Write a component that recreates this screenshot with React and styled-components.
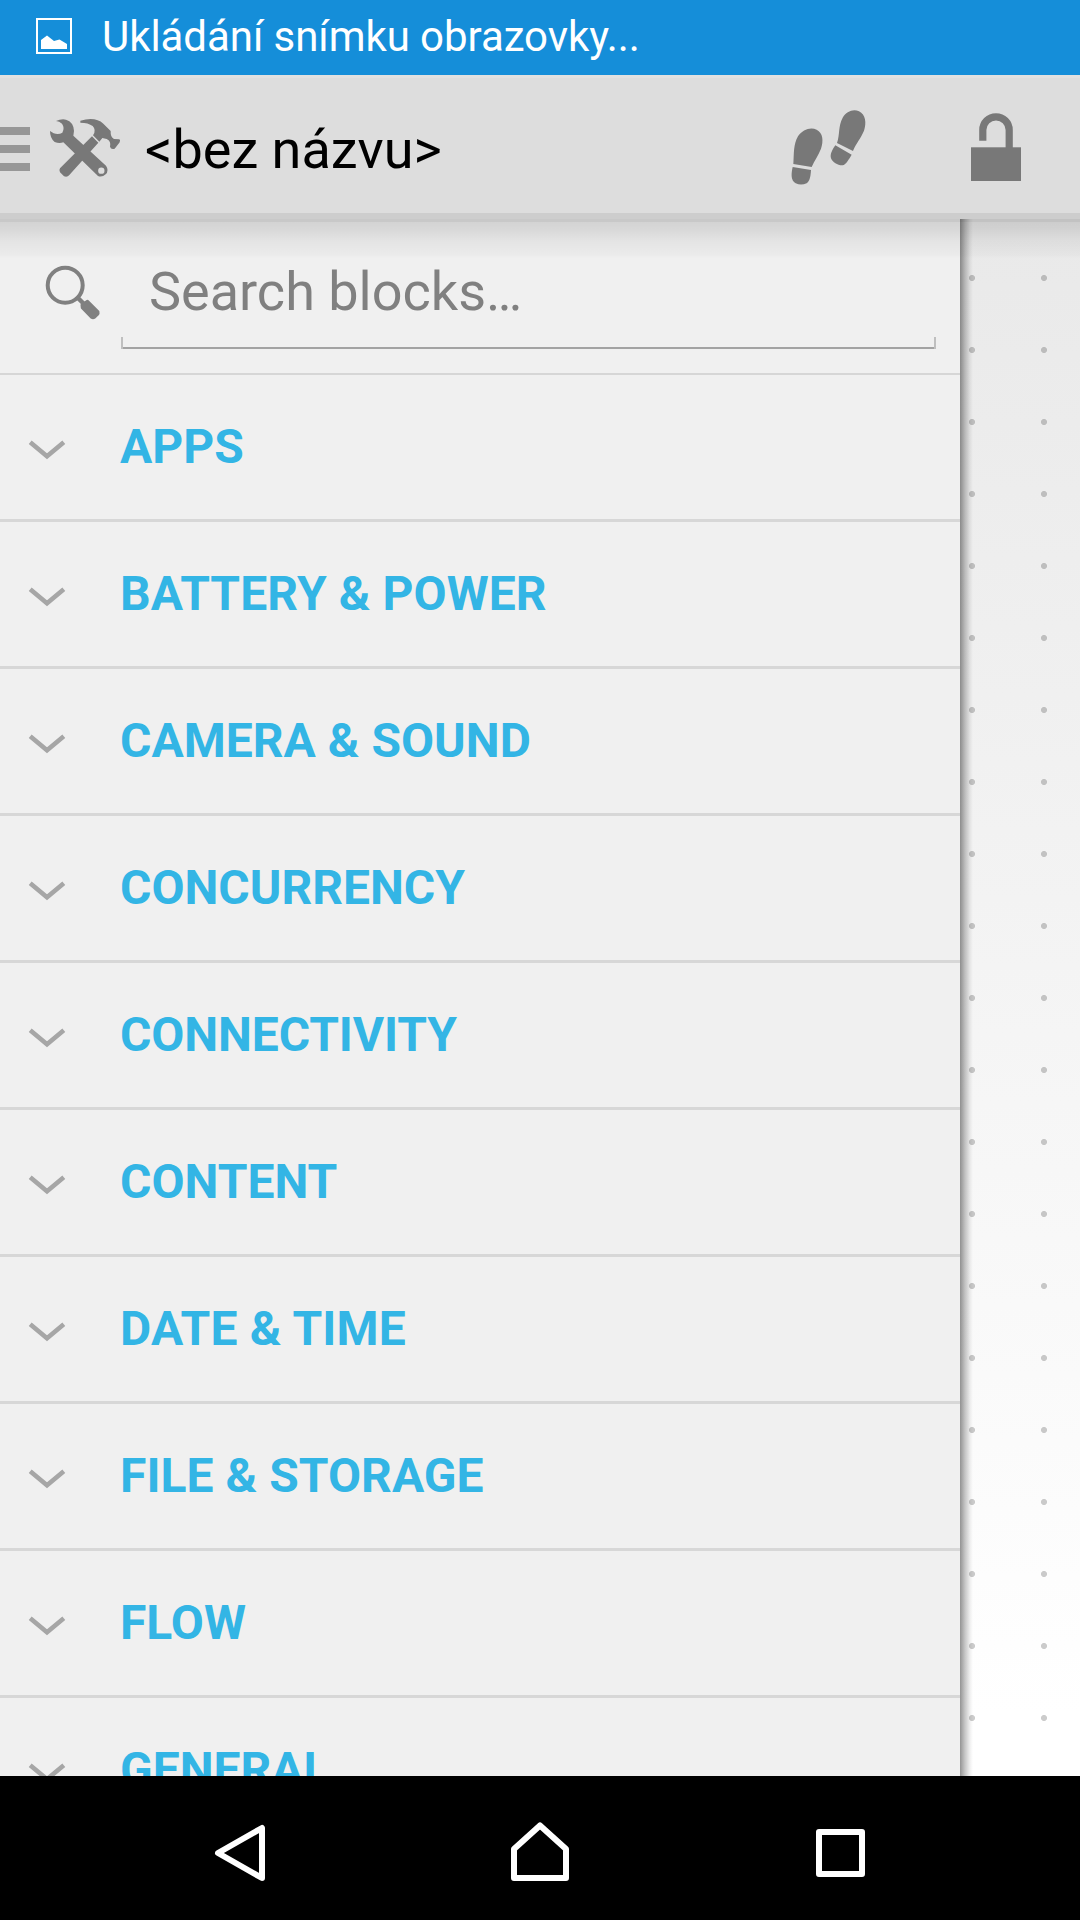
import React from 'react';
import styled, { createGlobalStyle } from 'styled-components';

const GlobalStyle = createGlobalStyle`
  html, body { margin: 0; padding: 0; background: #000; }
  *, *::before, *::after { box-sizing: border-box; }
`;

const Screen = styled.div`
  display: flex;
  flex-direction: column;
  width: 1080px;
  height: 1920px;
  overflow: hidden;
  font-family: Roboto, "Noto Sans", sans-serif;
`;

const StatusBar = styled.header`
  display: flex;
  align-items: center;
  flex: 0 0 75px;
  padding: 0 36px 3px;
  gap: 30px;
  background: #158ed9;
  color: #fff;
  font-size: 42px;
  letter-spacing: -0.06px;
  line-height: 70px;
  white-space: nowrap;
`;

const StatusText = styled.span`
  margin-top: 2px;
`;

const Toolbar = styled.div`
  display: flex;
  align-items: center;
  flex: 0 0 144px;
  border-top: 3px solid #e1e1e1;
  border-bottom: 6px solid #cdcdcd;
  background: #ddd;
`;

const MenuBars = styled.div`
  display: flex;
  flex-direction: column;
  gap: 10px;
  width: 30px;
  margin: 7px 19px 0 0;
`;

const MenuBar = styled.span`
  height: 8px;
  background: #979797;
`;

const Title = styled.h1`
  flex: 1;
  margin: 8px 0 0 24px;
  font-size: 54px;
  font-weight: 400;
  line-height: 64px;
  color: #000;
`;

const Action = styled.button`
  display: flex;
  align-items: center;
  justify-content: center;
  width: 168px;
  height: 135px;
  padding: 0;
  border: 0;
  background: none;
`;

const Icon = styled.svg`
  display: block;
  flex: none;
  width: ${(p) => p.$w}px;
  height: ${(p) => p.$h}px;
  margin: ${(p) => p.$m || '0'};
  overflow: visible;
`;

const Workspace = styled.main`
  position: relative;
  display: flex;
  flex: 1;
  min-height: 0;
  overflow: hidden;

  &::after {
    content: "";
    position: absolute;
    inset: 0 0 auto 0;
    height: 39px;
    pointer-events: none;
    background: linear-gradient(
      rgba(0, 0, 0, 0.168) 0 3px,
      rgba(0, 0, 0, 0.12) 3px,
      rgba(0, 0, 0, 0.1) 10px,
      rgba(0, 0, 0, 0.05) 22px,
      rgba(0, 0, 0, 0.02) 36px,
      rgba(0, 0, 0, 0) 39px
    );
  }
`;

const Drawer = styled.aside`
  display: flex;
  flex-direction: column;
  flex: 0 0 960px;
  background: #f0f0f0;
`;

const SearchRow = styled.div`
  display: flex;
  flex: 0 0 156px;
  padding: 0 24px 0 45px;
  border-bottom: 2px solid #d6d6d6;
`;

const SearchField = styled.div`
  position: relative;
  flex: 1;
  height: 130px;
  margin-left: 21px;
  padding: 41px 0 0 28px;
  border-bottom: 2px solid #a3a3a3;
  color: #808080;
  font-size: 54px;
  line-height: 64px;

  &::before,
  &::after {
    content: "";
    position: absolute;
    bottom: -2px;
    width: 2px;
    height: 12px;
    background: #bfbfbf;
  }
  &::before { left: 0; }
  &::after { right: 0; }
`;

const CategoryList = styled.ul`
  flex: 1;
  min-height: 0;
  margin: 0;
  padding: 0;
  overflow: hidden;
  list-style: none;
`;

const Category = styled.li`
  display: flex;
  align-items: center;
  height: 147px;
  padding: 0 0 1px 28px;
  border-bottom: 3px solid #d7d7d7;
  color: #33b5e5;
  font-size: 48px;
  font-weight: 700;
  letter-spacing: ${(p) => p.$tracking || 0}px;
  line-height: 56px;
  white-space: nowrap;
`;

const FlowCanvas = styled.section`
  flex: 1;
  background:
    linear-gradient(90deg, rgba(0,0,0,.42), rgba(0,0,0,.22) 5px, rgba(0,0,0,.06) 10px, rgba(0,0,0,0) 13px),
    radial-gradient(circle at 36px 36px, rgba(0,0,0,.2) 2.7px, rgba(0,0,0,0) 3.3px) -24px 23px / 72px 72px,
    linear-gradient(#e9e9e9, #fff 96%);
`;

const NavBar = styled.nav`
  display: flex;
  align-items: center;
  justify-content: space-between;
  flex: 0 0 144px;
  padding: 10px 215px 0;
  background: #000;
`;

const ScreenshotIcon = () => (
  <Icon $w={36} $h={36} viewBox="0 0 36 36">
    <rect x="1" y="1" width="34" height="34" fill="none" stroke="#fff" strokeWidth="2" />
    <path d="M5 31V22L11 17.5L18 23L23.5 21.5L31 26V31Z" fill="#fff" />
  </Icon>
);

const ToolsIcon = () => (
  <Icon $w={72} $h={60} $m="5px 0 0 0" viewBox="147 354 216 180" fill="#787878">
    <path d="M168 363Q184 356 198 359Q221 366 222 393L220 407L318 497Q328 512 317 523Q306 533 294 528L190 427Q178 432 164 426Q150 415 150 393L161 400Q176 405 187 398Q195 384 186 371Q178 364 168 363Z" />
    <path d="M276 409L295 428L208 525Q202 533 192 529L180 517Q176 511 180 505Z" />
    <path d="M241 362Q286 349 310 371L332 393Q331 412 342 417L358 418Q362 420 359 427L344 446Q333 450 330 440Q334 424 320 417L307 414L298 425L279 406Q290 391 278 378Q265 368 241 368Z" />
    <circle cx="304" cy="512" r="9.5" fill="#ddd" />
  </Icon>
);

const StepsIcon = () => (
  <Icon $w={75} $h={75} $m="3px 0 0 0" viewBox="212 149 225 225" fill="#787878">
    <path d="M219 311C221 279 219 252 233 228C247 207 271 199 289 208C308 218 310 241 302 265C294 286 283 299 274 320Z" />
    <path d="M217 320L272 329C271 345 269 362 259 369Q242 376 226 369C210 360 213 338 217 320Z" />
    <path d="M350 248C359 223 353 198 367 172C378 154 398 145 416 153C436 162 439 188 431 211C421 235 407 249 398 272Z" />
    <path d="M345 255L394 283C386 296 377 313 367 315C353 316 337 306 332 294C328 281 337 267 345 255Z" />
  </Icon>
);

const UnlockIcon = () => (
  <Icon $w={50} $h={68} $m="2px 0 0 0" viewBox="0 0 50 68">
    <path d="M11.8 27.7V17A13.2 13.2 0 0 1 38.2 17V36" fill="none" stroke="#787878" strokeWidth="7.2" />
    <rect y="34.3" width="50" height="33.7" fill="#787878" />
  </Icon>
);

const SearchIcon = () => (
  <Icon $w={55} $h={55} $m="46px 0 0 0" viewBox="0 0 55 55">
    <circle cx="20.2" cy="20.2" r="17.5" fill="none" stroke="#808080" strokeWidth="4" />
    <path d="M31.5 31.5L39 39" stroke="#808080" strokeWidth="4.5" />
    <path d="M42.5 36.3L53 46.8Q53.5 48.5 52.3 49.5L49.5 52.3Q48 53.2 46.5 52.3L37.3 42.8L37 40Z" fill="#808080" stroke="#808080" strokeWidth="3" strokeLinejoin="round" />
  </Icon>
);

const Chevron = () => (
  <Icon $w={38} $h={20} $m="7px 54px 0 0" viewBox="0 0 38 20">
    <path d="M2.2 2.2L19 16.2L35.8 2.2" fill="none" stroke="#a6a6a6" strokeWidth="4.6" />
  </Icon>
);

const NavIcon = ({ w, h, m, d }) => (
  <Icon $w={w} $h={h} $m={m} viewBox={`0 0 ${w} ${h}`}>
    <path d={d} fill="none" stroke="#fff" strokeWidth="6" strokeLinejoin="round" />
  </Icon>
);

const categories = [
  { name: 'APPS' },
  { name: 'BATTERY & POWER', tracking: 0.08 },
  { name: 'CAMERA & SOUND', tracking: 0.03 },
  { name: 'CONCURRENCY' },
  { name: 'CONNECTIVITY', tracking: -0.12 },
  { name: 'CONTENT' },
  { name: 'DATE & TIME', tracking: 0.2 },
  { name: 'FILE & STORAGE', tracking: 0.06 },
  { name: 'FLOW' },
  { name: 'GENERAL' },
];

export default function App() {
  return (
    <Screen>
      <GlobalStyle />
      <StatusBar>
        <ScreenshotIcon />
        <StatusText>Ukládání snímku obrazovky...</StatusText>
      </StatusBar>
      <Toolbar>
        <MenuBars><MenuBar /><MenuBar /><MenuBar /></MenuBars>
        <ToolsIcon />
        <Title>&lt;bez názvu&gt;</Title>
        <Action aria-label="Steps"><StepsIcon /></Action>
        <Action aria-label="Unlock"><UnlockIcon /></Action>
      </Toolbar>
      <Workspace>
        <Drawer>
          <SearchRow>
            <SearchIcon />
            <SearchField>Search blocks…</SearchField>
          </SearchRow>
          <CategoryList>
            {categories.map(({ name, tracking }) => (
              <Category key={name} $tracking={tracking}><Chevron />{name}</Category>
            ))}
          </CategoryList>
        </Drawer>
        <FlowCanvas />
      </Workspace>
      <NavBar>
        <NavIcon w={50} h={56} d="M3 28L47 3V53Z" />
        <NavIcon w={58} h={59} m="-3px 1px 0 0" d="M3 27L29 3.5L55 27V56H3Z" />
        <NavIcon w={49} h={48} d="M3 3H46V45H3Z" />
      </NavBar>
    </Screen>
  );
}
